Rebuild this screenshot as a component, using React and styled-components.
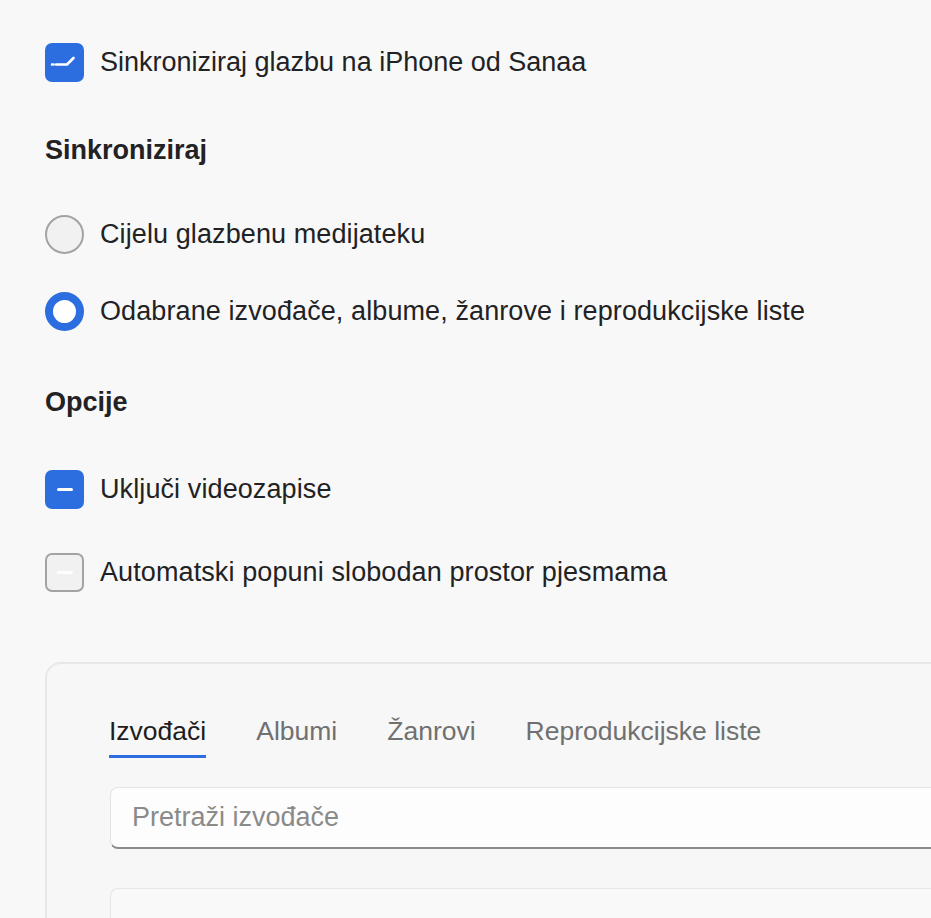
import React from 'react'
import styled, { createGlobalStyle } from 'styled-components'

const GlobalStyle = createGlobalStyle`
  html, body {
    margin: 0;
    padding: 0;
    background: #f8f8f8;
    overflow: hidden;
  }
  body {
    font-family: "Liberation Sans", Arial, sans-serif;
    color: #222224;
  }
`

const Page = styled.div`
  width: 931px;
  height: 918px;
  overflow: hidden;
  padding: 43px 0 0 45px;
  box-sizing: border-box;
  display: flex;
  flex-direction: column;
`

const Row = styled.label`
  display: flex;
  align-items: center;
  gap: 16px;
  height: 39px;
  font-size: 27px;
  letter-spacing: ${({ tight }) => (tight ? 0 : 0.1)}px;
  margin-top: ${({ gap }) => gap || 0}px;
`

const Heading = styled.div`
  font-size: 27px;
  font-weight: 700;
  line-height: 30px;
  margin-top: ${({ gap }) => gap || 0}px;
`

const Box = styled.span`
  width: 39px;
  height: 39px;
  box-sizing: border-box;
  border-radius: 7px;
  flex-shrink: 0;
  display: flex;
  align-items: center;
  justify-content: center;
  background: ${({ checked }) => (checked ? '#2c6ee0' : '#f1f1f1')};
  border: ${({ checked }) => (checked ? 'none' : '2px solid #a3a3a3')};
`

const Radio = styled.span`
  width: 39px;
  height: 39px;
  box-sizing: border-box;
  border-radius: 50%;
  flex-shrink: 0;
  background: ${({ checked }) => (checked ? '#fff' : '#f1f1f1')};
  border: ${({ checked }) => (checked ? '8px solid #2c6ee0' : '2px solid #a3a3a3')};
`

const Dash = styled.span`
  width: 16px;
  height: 3px;
  border-radius: 2px;
  background: #ffffff;
  opacity: ${({ light }) => (light ? 0.9 : 1)};
`

const Panel = styled.div`
  margin-top: 70px;
  width: 1000px;
  flex: 1;
  border: 2px solid #e7e7e7;
  border-right: none;
  border-bottom: none;
  border-radius: 16px 0 0 0;
  background: #f7f7f7;
  padding: 52px 0 0 62px;
  box-sizing: border-box;
`

const Tabs = styled.div`
  display: flex;
  gap: 50px;
`

const Tab = styled.div`
  font-size: 26.5px;
  line-height: 30px;
  padding-bottom: 9px;
  border-bottom: 3px solid ${({ active }) => (active ? '#2c6ee0' : 'transparent')};
  color: ${({ active }) => (active ? '#1d1d1f' : '#707070')};
`

const Search = styled.div`
  margin: 29px 0 0 1px;
  height: 62px;
  box-sizing: border-box;
  border: 1px solid #e4e4e4;
  border-bottom: 2px solid #8a8a8a;
  border-radius: 8px 0 0 8px;
  background: #fdfdfd;
  display: flex;
  align-items: center;
  padding-left: 21px;
  font-size: 27px;
  color: #8a8a8a;
`

const ListBox = styled.div`
  margin: 39px 0 0 1px;
  height: 60px;
  border: 1px solid #e6e6e6;
  border-right: none;
  border-radius: 8px 0 0 0;
  background: #f9f9f9;
`

const CheckMark = () => (
  <svg width="39" height="39" viewBox="0 0 39 39">
    <path d="M7 21.5h1.5M11 21.5h11l6.5-6.5" stroke="#fff" strokeWidth="2.6" fill="none" strokeLinecap="round" strokeLinejoin="round" />
  </svg>
)

const App = () => (
  <>
    <GlobalStyle />
    <Page>
      <Row tight>
        <Box checked><CheckMark /></Box>
        Sinkroniziraj glazbu na iPhone od Sanaa
      </Row>
      <Heading gap={53}>Sinkroniziraj</Heading>
      <Row gap={50}>
        <Radio />
        Cijelu glazbenu medijateku
      </Row>
      <Row gap={38}>
        <Radio checked />
        Odabrane izvođače, albume, žanrove i reprodukcijske liste
      </Row>
      <Heading gap={56}>Opcije</Heading>
      <Row gap={53}>
        <Box checked><Dash /></Box>
        Uključi videozapise
      </Row>
      <Row gap={44}>
        <Box><Dash light /></Box>
        Automatski popuni slobodan prostor pjesmama
      </Row>
      <Panel>
        <Tabs>
          <Tab active>Izvođači</Tab>
          <Tab>Albumi</Tab>
          <Tab>Žanrovi</Tab>
          <Tab>Reprodukcijske liste</Tab>
        </Tabs>
        <Search>Pretraži izvođače</Search>
        <ListBox />
      </Panel>
    </Page>
  </>
)

export default App
